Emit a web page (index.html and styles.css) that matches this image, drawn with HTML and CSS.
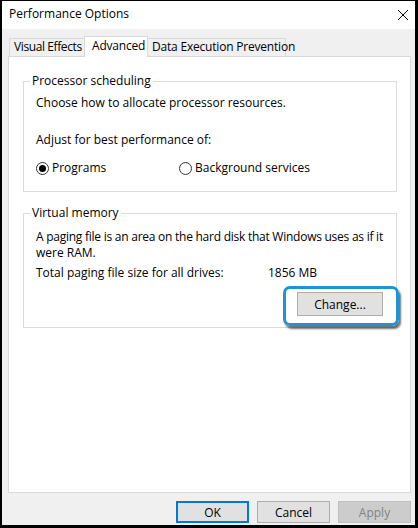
FILE: index.html
```html
<!DOCTYPE html>
<html lang="en">
<head>
    <meta charset="UTF-8">
    <title>Performance Options</title>
    <link rel="stylesheet" href="styles.css">
</head>
<body>
    <div class="window">
        <div class="titlebar">
            <span class="title">Performance Options</span>
            <svg class="close" width="12" height="12" viewBox="0 0 12 12">
                <path d="M1 1 L11 11 M11 1 L1 11" stroke="#000" stroke-width="1" fill="none"/>
            </svg>
        </div>
        <div class="tabs">
            <div class="tab tab-visual">Visual Effects</div>
            <div class="tab tab-advanced selected">Advanced</div>
            <div class="tab tab-dep">Data Execution Prevention</div>
        </div>
        <div class="panel">
            <fieldset class="group group-cpu">
                <legend>Processor scheduling</legend>
                <p class="line first">Choose how to allocate processor resources.</p>
                <p class="line adjust">Adjust for best performance of:</p>
                <div class="radios">
                    <label class="radio radio-programs"><span class="dot checked"></span>Programs</label>
                    <label class="radio"><span class="dot"></span>Background services</label>
                </div>
            </fieldset>
            <fieldset class="group group-vm">
                <legend>Virtual memory</legend>
                <p class="para"><span class="tight">A paging file is an area on the hard disk that Windows uses as if it</span><br>were RAM.</p>
                <div class="size-row">
                    <span>Total paging file size for all drives:</span>
                    <span>1856 MB</span>
                </div>
                <div class="change-row">
                    <div class="change-wrap">
                        <button class="btn btn-change">Change...</button>
                        <div class="highlight"></div>
                    </div>
                </div>
            </fieldset>
        </div>
        <div class="footer">
            <button class="btn btn-ok">OK</button>
            <button class="btn">Cancel</button>
            <button class="btn btn-disabled">Apply</button>
        </div>
    </div>
</body>
</html>
```

FILE: styles.css
```css
body {
    margin: 0;
    padding: 0;
    background: #000;
    font-family: "Open Sans", "Noto Sans", sans-serif;
    font-size: 12px;
    color: #000;
}
.window {
    margin: 1px 3px 3px 2px;
    width: 413px;
    height: 524px;
    background: #f0f0f0;
    display: flex;
    flex-direction: column;
}
.titlebar {
    height: 28px;
    background: #fff;
    display: flex;
    align-items: center;
    justify-content: space-between;
    padding: 0 6px 0 7px;
}
.title {
    font-size: 12px;
    line-height: 16px;
    margin-top: -2px;
}
.close {
    margin-top: -1px;
}
.tabs {
    height: 27px;
    display: flex;
    align-items: flex-end;
    padding-left: 7px;
}
.tab {
    box-sizing: border-box;
    height: 18px;
    line-height: 16px;
    background: #f0f0f0;
    border: 1px solid #d9d9d9;
    border-bottom: none;
    padding-left: 5px;
    white-space: nowrap;
    letter-spacing: -0.2px;
}
.tab-visual {
    width: 75px;
    border-right: none;
    padding-left: 4px;
    letter-spacing: -0.4px;
}
.tab-advanced {
    width: 64px;
    padding-left: 7px;
}
.tab-dep {
    width: 138px;
    border-left: none;
    padding-left: 4px;
}
.tab.selected {
    height: 21px;
    background: #fff;
    margin-bottom: -1px;
    position: relative;
    z-index: 1;
    line-height: 18px;
}
.panel {
    box-sizing: border-box;
    height: 437px;
    margin: 0 4px 0 6px;
    background: #fff;
    border: 1px solid #d9d9d9;
    padding: 16px 13px 0 14px;
}
.group {
    margin: 0;
    border: 1px solid #dcdcdc;
    padding: 0 13px 0 12px;
}
.group legend {
    margin-left: -6px;
    padding: 0 2px;
    line-height: 16px;
}
.line {
    margin: 0;
    line-height: 16px;
}
.first {
    margin-top: 6px;
}
.adjust {
    margin-top: 21px;
}
.radios {
    display: flex;
    margin-top: 12px;
    margin-bottom: 15px;
    line-height: 16px;
}
.radio {
    display: flex;
    align-items: center;
}
.radio-programs {
    width: 143px;
}
.dot {
    box-sizing: border-box;
    width: 13px;
    height: 13px;
    border: 1px solid #333;
    border-radius: 50%;
    margin-right: 3px;
    position: relative;
}
.dot.checked::after {
    content: "";
    position: absolute;
    left: 2px;
    top: 2px;
    width: 7px;
    height: 7px;
    border-radius: 50%;
    background: #000;
}
.group-vm {
    margin-top: 13px;
}
.para {
    margin: 8px 0 0;
    line-height: 16px;
    white-space: nowrap;
}
.tight {
    letter-spacing: -0.25px;
}
.size-row {
    display: grid;
    grid-template-columns: 232px auto;
    margin-top: 4px;
    line-height: 16px;
}
.change-row {
    display: flex;
    justify-content: flex-end;
    margin-top: 11px;
    padding-bottom: 11px;
}
.change-wrap {
    position: relative;
}
.btn {
    box-sizing: border-box;
    width: 73px;
    height: 22px;
    background: #e1e1e1;
    border: 1px solid #adadad;
    font-family: "Open Sans", "Noto Sans", sans-serif;
    font-size: 12px;
    color: #000;
    padding: 0;
    display: block;
}
.btn-change {
    width: 86px;
    height: 24px;
}
.highlight {
    position: absolute;
    left: -14px;
    top: -6px;
    width: 116px;
    height: 40px;
    box-sizing: border-box;
    border: 3px solid #1e94d2;
    border-radius: 7px;
    box-shadow: 2px 3px 2px rgba(0, 0, 0, 0.55);
}
.footer {
    display: flex;
    justify-content: flex-end;
    gap: 8px;
    padding: 8px 4px 0 0;
}
.btn-ok {
    border: 2px solid #0078d7;
}
.btn-disabled {
    background: #cccccc;
    border-color: #bfbfbf;
    color: #838383;
}
```
